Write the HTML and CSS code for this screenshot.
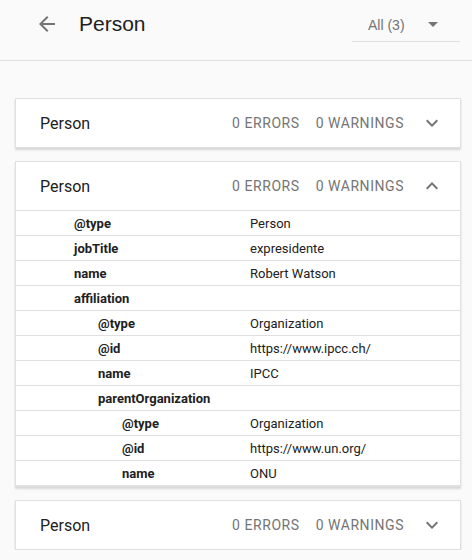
FILE: index.html
```html
<!DOCTYPE html>
<html>
<head>
<meta charset="utf-8">
<link rel="stylesheet" href="styles.css">
</head>
<body>
<header class="topbar">
  <svg class="back" width="24" height="24" viewBox="0 0 24 24"><path d="M20 11H7.83l5.59-5.59L12 4l-8 8 8 8 1.41-1.41L7.83 13H20v-2z" fill="#757575"/></svg>
  <h1 class="title">Person</h1>
  <div class="select">
    <span class="select-label">All (3)</span>
    <svg class="caret" width="10" height="5" viewBox="0 0 10 5"><path d="M0 0l5 5 5-5z" fill="#757575"/></svg>
  </div>
</header>
<main class="list">
  <section class="card">
    <div class="card-head">
      <span class="card-title">Person</span>
      <span class="count">0 ERRORS</span>
      <span class="count">0 WARNINGS</span>
      <svg class="chev" width="24" height="24" viewBox="0 0 24 24"><path d="M7.41 8.59L12 13.17l4.59-4.58L18 10l-6 6-6-6 1.41-1.41z" fill="#757575"/></svg>
    </div>
  </section>
  <section class="card">
    <div class="card-head">
      <span class="card-title">Person</span>
      <span class="count">0 ERRORS</span>
      <span class="count">0 WARNINGS</span>
      <svg class="chev" width="24" height="24" viewBox="0 0 24 24"><path d="M7.41 15.41L12 10.83l4.59 4.58L18 14l-6-6-6 6z" fill="#757575"/></svg>
    </div>
    <div class="rows">
      <div class="row"><span class="key l0">@type</span><span class="val">Person</span></div>
      <div class="row"><span class="key l0">jobTitle</span><span class="val">expresidente</span></div>
      <div class="row"><span class="key l0">name</span><span class="val">Robert Watson</span></div>
      <div class="row"><span class="key l0">affiliation</span><span class="val"></span></div>
      <div class="row"><span class="key l1">@type</span><span class="val">Organization</span></div>
      <div class="row"><span class="key l1">@id</span><span class="val">https://www.ipcc.ch/</span></div>
      <div class="row"><span class="key l1">name</span><span class="val">IPCC</span></div>
      <div class="row"><span class="key l1">parentOrganization</span><span class="val"></span></div>
      <div class="row"><span class="key l2">@type</span><span class="val">Organization</span></div>
      <div class="row"><span class="key l2">@id</span><span class="val">https://www.un.org/</span></div>
      <div class="row"><span class="key l2">name</span><span class="val">ONU</span></div>
    </div>
  </section>
  <section class="card">
    <div class="card-head">
      <span class="card-title">Person</span>
      <span class="count">0 ERRORS</span>
      <span class="count">0 WARNINGS</span>
      <svg class="chev" width="24" height="24" viewBox="0 0 24 24"><path d="M7.41 8.59L12 13.17l4.59-4.58L18 10l-6 6-6-6 1.41-1.41z" fill="#757575"/></svg>
    </div>
  </section>
</main>
</body>
</html>
```
FILE: styles.css
```css
html, body {
  margin: 0;
  padding: 0;
  background: #fafafa;
  font-family: Roboto, "Liberation Sans", sans-serif;
  color: #212121;
}
.topbar {
  height: 60px;
  border-bottom: 1px solid #e0e0e0;
  display: flex;
  align-items: center;
  padding-left: 35px;
  padding-right: 12px;
  box-sizing: content-box;
}
.back {
  display: block;
  margin-top: -12px;
}
.title {
  margin: -12px 0 0 20px;
  font-family: "Liberation Sans", Arial, sans-serif;
  font-weight: normal;
  font-size: 21px;
  color: #212121;
  flex: 1;
}
.select {
  width: 108px;
  height: 42px;
  box-sizing: border-box;
  border-bottom: 1px solid #e0e0e0;
  display: flex;
  align-items: center;
  padding-left: 16px;
  margin-top: -18px;
}
.select-label {
  font-family: "Liberation Sans", Arial, sans-serif;
  font-size: 14px;
  color: #757575;
  flex: 1;
  margin-top: 8px;
}
.caret {
  display: block;
  margin-right: 22px;
  margin-top: 8px;
}
.list {
  padding: 37px 11px 0 15px;
  display: flex;
  flex-direction: column;
  gap: 13px;
}
.card {
  background: #fff;
  border: 1px solid #e0e0e0;
  box-shadow: 0 2px 2px rgba(0,0,0,0.14);
}
.card-head {
  height: 48px;
  display: flex;
  align-items: center;
  padding-left: 24px;
  padding-right: 16px;
}
.card-title {
  flex: 1;
  font-size: 16px;
  color: #212121;
}
.count {
  font-size: 14px;
  color: #757575;
  letter-spacing: 0.55px;
  margin-right: 16px;
}
.chev {
  display: block;
}
.rows {
  display: flex;
  flex-direction: column;
  border-bottom: 1px solid #e0e0e0;
}
.row {
  display: flex;
  height: 24px;
  align-items: center;
  border-top: 1px solid #e0e0e0;
  font-size: 13px;
}
.key {
  font-weight: bold;
  width: 234px;
  box-sizing: border-box;
  color: #212121;
}
.l0 { padding-left: 58px; }
.l1 { padding-left: 82px; }
.l2 { padding-left: 106px; }
.val {
  color: #212121;
}
```
